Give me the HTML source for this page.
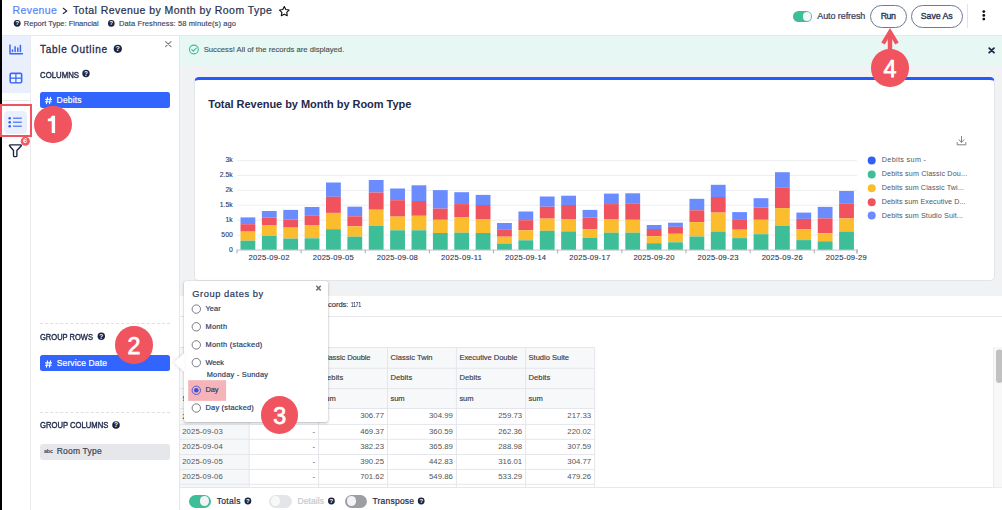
<!DOCTYPE html>
<html><head><meta charset="utf-8">
<style>
*{box-sizing:border-box;margin:0;padding:0}
html,body{width:1002px;height:510px;overflow:hidden;background:#fff;font-family:"Liberation Sans",sans-serif}
.a{position:absolute}
.t{position:absolute;white-space:pre;line-height:1;font-family:"Liberation Sans",sans-serif}
svg.full{position:absolute;left:0;top:0;width:1002px;height:510px;overflow:visible}
.badge{position:absolute;width:37.4px;height:37.4px;border-radius:50%;background:#f0545f;color:#fff;font-family:"Liberation Sans",sans-serif;font-weight:400;font-size:23.3px;line-height:37.4px;text-align:center;-webkit-text-stroke:0.75px #fff}
.badge span{position:relative;top:1.6px}
.tog{position:absolute;border-radius:7px}
.knob{position:absolute;border-radius:50%;background:#fff}
</style></head><body>
<!-- header -->
<div class="a" style="left:0;top:34.6px;width:1002px;height:1px;background:#e6e8ec"></div>
<!-- sidebar -->
<div class="a" style="left:2px;top:35.6px;width:28px;height:57.2px;background:#e9effd"></div>
<div class="a" style="left:2px;top:99.5px;width:28px;height:1px;background:#e6e8ec"></div>
<div class="a" style="left:30px;top:35px;width:1px;height:475px;background:#e9ebef"></div>
<div class="a" style="left:4.2px;top:111px;width:22.4px;height:22.6px;border-radius:4.5px;background:#e9effd"></div>
<!-- outline panel -->
<div class="a" style="left:179px;top:35px;width:1px;height:475px;background:#e4e6ea"></div>
<div class="a" style="left:40px;top:92.3px;width:130px;height:15.8px;border-radius:2.5px;background:#3165fd"></div>
<div class="a" style="left:40px;top:323px;width:130px;height:0;border-top:1px dashed #dcdfe4"></div>
<div class="a" style="left:40px;top:355.3px;width:130px;height:16.2px;border-radius:2.5px;background:#3165fd"></div>
<div class="a" style="left:40px;top:411.5px;width:130px;height:0;border-top:1px dashed #dcdfe4"></div>
<div class="a" style="left:40px;top:443.8px;width:130px;height:16px;border-radius:3px;background:#e5e7eb"></div>
<!-- main -->
<div class="a" style="left:180px;top:35.6px;width:822px;height:29.6px;background:#e7f7f3"></div>
<div class="a" style="left:180px;top:65.2px;width:822px;height:230.4px;background:#f1f2f4"></div>
<div class="a" style="left:193.6px;top:77.3px;width:801.5px;height:203.3px;background:#fff;border:1px solid #e3e5e9;border-top:3px solid #2659fb;border-radius:5px"></div>
<div class="a" style="left:180px;top:316px;width:822px;height:1px;background:#e6e8ec"></div>
<div class="a" style="left:180px;top:487px;width:822px;height:1px;background:#e6e8ec"></div>
<svg class="full" viewBox="0 0 1002 510"><rect x="179.5" y="347.5" width="415.20000000000005" height="61.0" fill="#f7f8fa"/>
<rect x="179.5" y="408.5" width="69.69999999999999" height="78.5" fill="#f6f7f9"/>
<line x1="179.5" y1="347.5" x2="594.7" y2="347.5" stroke="#e4e6eb" stroke-width="1"/>
<line x1="179.5" y1="368.3" x2="594.7" y2="368.3" stroke="#e4e6eb" stroke-width="1"/>
<line x1="179.5" y1="388.7" x2="594.7" y2="388.7" stroke="#e4e6eb" stroke-width="1"/>
<line x1="179.5" y1="408.5" x2="594.7" y2="408.5" stroke="#e4e6eb" stroke-width="1"/>
<line x1="179.5" y1="424.4" x2="594.7" y2="424.4" stroke="#e4e6eb" stroke-width="1"/>
<line x1="179.5" y1="439.3" x2="594.7" y2="439.3" stroke="#e4e6eb" stroke-width="1"/>
<line x1="179.5" y1="454.5" x2="594.7" y2="454.5" stroke="#e4e6eb" stroke-width="1"/>
<line x1="179.5" y1="469.4" x2="594.7" y2="469.4" stroke="#e4e6eb" stroke-width="1"/>
<line x1="179.5" y1="484.3" x2="594.7" y2="484.3" stroke="#e4e6eb" stroke-width="1"/>
<line x1="179.5" y1="347.5" x2="179.5" y2="487" stroke="#e4e6eb" stroke-width="1"/>
<line x1="249.2" y1="347.5" x2="249.2" y2="487" stroke="#e4e6eb" stroke-width="1"/>
<line x1="318.6" y1="347.5" x2="318.6" y2="487" stroke="#e4e6eb" stroke-width="1"/>
<line x1="387.5" y1="347.5" x2="387.5" y2="487" stroke="#e4e6eb" stroke-width="1"/>
<line x1="456.4" y1="347.5" x2="456.4" y2="487" stroke="#e4e6eb" stroke-width="1"/>
<line x1="525.6" y1="347.5" x2="525.6" y2="487" stroke="#e4e6eb" stroke-width="1"/>
<line x1="594.7" y1="347.5" x2="594.7" y2="487" stroke="#e4e6eb" stroke-width="1"/>
<rect x="993.5" y="347" width="8.5" height="140.3" fill="#f8f8f8"/>
<line x1="993.6" y1="347" x2="993.6" y2="487.3" stroke="#ececec" stroke-width="1"/>
<rect x="996" y="349.4" width="6.5" height="33.6" rx="3" fill="#c1c1c1"/>
<line x1="237.2" y1="235.1" x2="857" y2="235.1" stroke="#eceef2" stroke-width="1"/>
<line x1="237.2" y1="220.2" x2="857" y2="220.2" stroke="#eceef2" stroke-width="1"/>
<line x1="237.2" y1="205.2" x2="857" y2="205.2" stroke="#eceef2" stroke-width="1"/>
<line x1="237.2" y1="190.4" x2="857" y2="190.4" stroke="#eceef2" stroke-width="1"/>
<line x1="237.2" y1="175.5" x2="857" y2="175.5" stroke="#eceef2" stroke-width="1"/>
<line x1="237.2" y1="160.6" x2="857" y2="160.6" stroke="#eceef2" stroke-width="1"/>
<line x1="237" y1="250.1" x2="857.5" y2="250.1" stroke="#c2c6cd" stroke-width="1"/>
<line x1="237.00" y1="249.6" x2="237.00" y2="253.4" stroke="#a9adb5" stroke-width="1"/>
<line x1="301.14" y1="249.6" x2="301.14" y2="253.4" stroke="#a9adb5" stroke-width="1"/>
<line x1="365.28" y1="249.6" x2="365.28" y2="253.4" stroke="#a9adb5" stroke-width="1"/>
<line x1="429.41" y1="249.6" x2="429.41" y2="253.4" stroke="#a9adb5" stroke-width="1"/>
<line x1="493.55" y1="249.6" x2="493.55" y2="253.4" stroke="#a9adb5" stroke-width="1"/>
<line x1="557.69" y1="249.6" x2="557.69" y2="253.4" stroke="#a9adb5" stroke-width="1"/>
<line x1="621.83" y1="249.6" x2="621.83" y2="253.4" stroke="#a9adb5" stroke-width="1"/>
<line x1="685.97" y1="249.6" x2="685.97" y2="253.4" stroke="#a9adb5" stroke-width="1"/>
<line x1="750.10" y1="249.6" x2="750.10" y2="253.4" stroke="#a9adb5" stroke-width="1"/>
<line x1="814.24" y1="249.6" x2="814.24" y2="253.4" stroke="#a9adb5" stroke-width="1"/>
<line x1="857.00" y1="249.6" x2="857.00" y2="253.4" stroke="#a9adb5" stroke-width="1"/>
<line x1="857" y1="249.6" x2="857" y2="253.4" stroke="#a9adb5" stroke-width="1"/>
<rect x="240.50" y="217.4" width="14.8" height="6.80" fill="#6a8cff"/>
<rect x="240.50" y="224.2" width="14.8" height="7.40" fill="#f0525e"/>
<rect x="240.50" y="231.6" width="14.8" height="9.10" fill="#fbbd2e"/>
<rect x="240.50" y="240.7" width="14.8" height="9.00" fill="#3dbd98"/>
<rect x="261.88" y="211" width="14.8" height="6.40" fill="#6a8cff"/>
<rect x="261.88" y="217.4" width="14.8" height="7.60" fill="#f0525e"/>
<rect x="261.88" y="225" width="14.8" height="10.90" fill="#fbbd2e"/>
<rect x="261.88" y="235.9" width="14.8" height="13.80" fill="#3dbd98"/>
<rect x="283.26" y="209.9" width="14.8" height="9.50" fill="#6a8cff"/>
<rect x="283.26" y="219.4" width="14.8" height="8.20" fill="#f0525e"/>
<rect x="283.26" y="227.6" width="14.8" height="11.00" fill="#fbbd2e"/>
<rect x="283.26" y="238.6" width="14.8" height="11.10" fill="#3dbd98"/>
<rect x="304.64" y="207" width="14.8" height="8.80" fill="#6a8cff"/>
<rect x="304.64" y="215.8" width="14.8" height="9.20" fill="#f0525e"/>
<rect x="304.64" y="225" width="14.8" height="13.30" fill="#fbbd2e"/>
<rect x="304.64" y="238.3" width="14.8" height="11.40" fill="#3dbd98"/>
<rect x="326.02" y="182.5" width="14.8" height="14.30" fill="#6a8cff"/>
<rect x="326.02" y="196.8" width="14.8" height="16.10" fill="#f0525e"/>
<rect x="326.02" y="212.9" width="14.8" height="16.30" fill="#fbbd2e"/>
<rect x="326.02" y="229.2" width="14.8" height="20.50" fill="#3dbd98"/>
<rect x="347.40" y="206.7" width="14.8" height="9.60" fill="#6a8cff"/>
<rect x="347.40" y="216.3" width="14.8" height="10.00" fill="#f0525e"/>
<rect x="347.40" y="226.3" width="14.8" height="10.40" fill="#fbbd2e"/>
<rect x="347.40" y="236.7" width="14.8" height="13.00" fill="#3dbd98"/>
<rect x="368.78" y="180" width="14.8" height="12.50" fill="#6a8cff"/>
<rect x="368.78" y="192.5" width="14.8" height="17.20" fill="#f0525e"/>
<rect x="368.78" y="209.7" width="14.8" height="16.10" fill="#fbbd2e"/>
<rect x="368.78" y="225.8" width="14.8" height="23.90" fill="#3dbd98"/>
<rect x="390.16" y="188.5" width="14.8" height="11.70" fill="#6a8cff"/>
<rect x="390.16" y="200.2" width="14.8" height="16.40" fill="#f0525e"/>
<rect x="390.16" y="216.6" width="14.8" height="13.70" fill="#fbbd2e"/>
<rect x="390.16" y="230.3" width="14.8" height="19.40" fill="#3dbd98"/>
<rect x="411.53" y="185.3" width="14.8" height="15.70" fill="#6a8cff"/>
<rect x="411.53" y="201" width="14.8" height="14.80" fill="#f0525e"/>
<rect x="411.53" y="215.8" width="14.8" height="14.50" fill="#fbbd2e"/>
<rect x="411.53" y="230.3" width="14.8" height="19.40" fill="#3dbd98"/>
<rect x="432.91" y="190.1" width="14.8" height="18.50" fill="#6a8cff"/>
<rect x="432.91" y="208.6" width="14.8" height="11.20" fill="#f0525e"/>
<rect x="432.91" y="219.8" width="14.8" height="13.20" fill="#fbbd2e"/>
<rect x="432.91" y="233" width="14.8" height="16.70" fill="#3dbd98"/>
<rect x="454.29" y="192.2" width="14.8" height="11.90" fill="#6a8cff"/>
<rect x="454.29" y="204.1" width="14.8" height="12.90" fill="#f0525e"/>
<rect x="454.29" y="217" width="14.8" height="15.70" fill="#fbbd2e"/>
<rect x="454.29" y="232.7" width="14.8" height="17.00" fill="#3dbd98"/>
<rect x="475.67" y="194.9" width="14.8" height="10.10" fill="#6a8cff"/>
<rect x="475.67" y="205" width="14.8" height="14.00" fill="#f0525e"/>
<rect x="475.67" y="219" width="14.8" height="14.00" fill="#fbbd2e"/>
<rect x="475.67" y="233" width="14.8" height="16.70" fill="#3dbd98"/>
<rect x="497.05" y="223" width="14.8" height="6.80" fill="#6a8cff"/>
<rect x="497.05" y="229.8" width="14.8" height="6.90" fill="#f0525e"/>
<rect x="497.05" y="236.7" width="14.8" height="6.80" fill="#fbbd2e"/>
<rect x="497.05" y="243.5" width="14.8" height="6.20" fill="#3dbd98"/>
<rect x="518.43" y="211.5" width="14.8" height="8.70" fill="#6a8cff"/>
<rect x="518.43" y="220.2" width="14.8" height="10.10" fill="#f0525e"/>
<rect x="518.43" y="230.3" width="14.8" height="10.00" fill="#fbbd2e"/>
<rect x="518.43" y="240.3" width="14.8" height="9.40" fill="#3dbd98"/>
<rect x="539.81" y="196.5" width="14.8" height="10.20" fill="#6a8cff"/>
<rect x="539.81" y="206.7" width="14.8" height="11.90" fill="#f0525e"/>
<rect x="539.81" y="218.6" width="14.8" height="12.20" fill="#fbbd2e"/>
<rect x="539.81" y="230.8" width="14.8" height="18.90" fill="#3dbd98"/>
<rect x="561.19" y="195.7" width="14.8" height="9.30" fill="#6a8cff"/>
<rect x="561.19" y="205" width="14.8" height="14.00" fill="#f0525e"/>
<rect x="561.19" y="219" width="14.8" height="12.40" fill="#fbbd2e"/>
<rect x="561.19" y="231.4" width="14.8" height="18.30" fill="#3dbd98"/>
<rect x="582.57" y="209.9" width="14.8" height="7.50" fill="#6a8cff"/>
<rect x="582.57" y="217.4" width="14.8" height="11.80" fill="#f0525e"/>
<rect x="582.57" y="229.2" width="14.8" height="8.60" fill="#fbbd2e"/>
<rect x="582.57" y="237.8" width="14.8" height="11.90" fill="#3dbd98"/>
<rect x="603.95" y="193.6" width="14.8" height="10.50" fill="#6a8cff"/>
<rect x="603.95" y="204.1" width="14.8" height="15.40" fill="#f0525e"/>
<rect x="603.95" y="219.5" width="14.8" height="13.20" fill="#fbbd2e"/>
<rect x="603.95" y="232.7" width="14.8" height="17.00" fill="#3dbd98"/>
<rect x="625.33" y="193.3" width="14.8" height="10.50" fill="#6a8cff"/>
<rect x="625.33" y="203.8" width="14.8" height="16.00" fill="#f0525e"/>
<rect x="625.33" y="219.8" width="14.8" height="12.90" fill="#fbbd2e"/>
<rect x="625.33" y="232.7" width="14.8" height="17.00" fill="#3dbd98"/>
<rect x="646.71" y="225" width="14.8" height="4.00" fill="#6a8cff"/>
<rect x="646.71" y="229" width="14.8" height="7.20" fill="#f0525e"/>
<rect x="646.71" y="236.2" width="14.8" height="7.00" fill="#fbbd2e"/>
<rect x="646.71" y="243.2" width="14.8" height="6.50" fill="#3dbd98"/>
<rect x="668.09" y="222.7" width="14.8" height="4.10" fill="#6a8cff"/>
<rect x="668.09" y="226.8" width="14.8" height="7.00" fill="#f0525e"/>
<rect x="668.09" y="233.8" width="14.8" height="8.50" fill="#fbbd2e"/>
<rect x="668.09" y="242.3" width="14.8" height="7.40" fill="#3dbd98"/>
<rect x="689.47" y="198.8" width="14.8" height="11.50" fill="#6a8cff"/>
<rect x="689.47" y="210.3" width="14.8" height="11.80" fill="#f0525e"/>
<rect x="689.47" y="222.1" width="14.8" height="14.40" fill="#fbbd2e"/>
<rect x="689.47" y="236.5" width="14.8" height="13.20" fill="#3dbd98"/>
<rect x="710.84" y="184.8" width="14.8" height="12.20" fill="#6a8cff"/>
<rect x="710.84" y="197" width="14.8" height="15.60" fill="#f0525e"/>
<rect x="710.84" y="212.6" width="14.8" height="18.90" fill="#fbbd2e"/>
<rect x="710.84" y="231.5" width="14.8" height="18.20" fill="#3dbd98"/>
<rect x="732.22" y="212.1" width="14.8" height="7.10" fill="#6a8cff"/>
<rect x="732.22" y="219.2" width="14.8" height="10.50" fill="#f0525e"/>
<rect x="732.22" y="229.7" width="14.8" height="8.40" fill="#fbbd2e"/>
<rect x="732.22" y="238.1" width="14.8" height="11.60" fill="#3dbd98"/>
<rect x="753.60" y="198.2" width="14.8" height="9.40" fill="#6a8cff"/>
<rect x="753.60" y="207.6" width="14.8" height="12.20" fill="#f0525e"/>
<rect x="753.60" y="219.8" width="14.8" height="14.40" fill="#fbbd2e"/>
<rect x="753.60" y="234.2" width="14.8" height="15.50" fill="#3dbd98"/>
<rect x="774.98" y="172.2" width="14.8" height="15.60" fill="#6a8cff"/>
<rect x="774.98" y="187.8" width="14.8" height="20.30" fill="#f0525e"/>
<rect x="774.98" y="208.1" width="14.8" height="17.60" fill="#fbbd2e"/>
<rect x="774.98" y="225.7" width="14.8" height="24.00" fill="#3dbd98"/>
<rect x="796.36" y="212.6" width="14.8" height="6.30" fill="#6a8cff"/>
<rect x="796.36" y="218.9" width="14.8" height="10.40" fill="#f0525e"/>
<rect x="796.36" y="229.3" width="14.8" height="10.80" fill="#fbbd2e"/>
<rect x="796.36" y="240.1" width="14.8" height="9.60" fill="#3dbd98"/>
<rect x="817.74" y="206.9" width="14.8" height="11.50" fill="#6a8cff"/>
<rect x="817.74" y="218.4" width="14.8" height="14.90" fill="#f0525e"/>
<rect x="817.74" y="233.3" width="14.8" height="8.00" fill="#fbbd2e"/>
<rect x="817.74" y="241.3" width="14.8" height="8.40" fill="#3dbd98"/>
<rect x="839.12" y="191" width="14.8" height="12.30" fill="#6a8cff"/>
<rect x="839.12" y="203.3" width="14.8" height="15.10" fill="#f0525e"/>
<rect x="839.12" y="218.4" width="14.8" height="13.10" fill="#fbbd2e"/>
<rect x="839.12" y="231.5" width="14.8" height="18.20" fill="#3dbd98"/>
<circle cx="871.7" cy="160.4" r="4" fill="#2f5ff5"/>
<circle cx="871.7" cy="174.4" r="4" fill="#3dbd98"/>
<circle cx="871.7" cy="188.2" r="4" fill="#fbbd2e"/>
<circle cx="871.7" cy="202.2" r="4" fill="#f0525e"/>
<circle cx="871.7" cy="215.6" r="4" fill="#6a8cff"/>
<circle cx="17.2" cy="23.35" r="3.4" fill="#1b2442"/><text x="17.2" y="25.46" text-anchor="middle" font-family="Liberation Sans" font-weight="700" font-size="5.95" fill="#fff">?</text>
<circle cx="111.3" cy="23.4" r="3.3" fill="#1b2442"/><text x="111.3" y="25.45" text-anchor="middle" font-family="Liberation Sans" font-weight="700" font-size="5.77" fill="#fff">?</text>
<path d="M63.3,8.3 L66.8,10.9 L63.3,13.5" fill="none" stroke="#28314f" stroke-width="1.25" stroke-linecap="round" stroke-linejoin="round"/>
<polygon points="284.30,6.60 285.80,9.54 289.06,10.05 286.73,12.39 287.24,15.65 284.30,14.15 281.36,15.65 281.87,12.39 279.54,10.05 282.80,9.54" fill="none" stroke="#111" stroke-width="1.15" stroke-linejoin="round"/>
<circle cx="983.8" cy="11.6" r="1.4" fill="#111"/>
<circle cx="983.8" cy="15.4" r="1.4" fill="#111"/>
<circle cx="983.8" cy="19.1" r="1.4" fill="#111"/>
<circle cx="117.8" cy="48.8" r="4.1" fill="#1b2442"/><text x="117.8" y="51.34" text-anchor="middle" font-family="Liberation Sans" font-weight="700" font-size="7.17" fill="#fff">?</text>
<circle cx="86.0" cy="73.5" r="3.7" fill="#1b2442"/><text x="86.0" y="75.79" text-anchor="middle" font-family="Liberation Sans" font-weight="700" font-size="6.48" fill="#fff">?</text>
<circle cx="101.3" cy="336.3" r="3.7" fill="#1b2442"/><text x="101.3" y="338.59" text-anchor="middle" font-family="Liberation Sans" font-weight="700" font-size="6.48" fill="#fff">?</text>
<circle cx="116.0" cy="425.0" r="3.8" fill="#1b2442"/><text x="116.0" y="427.36" text-anchor="middle" font-family="Liberation Sans" font-weight="700" font-size="6.65" fill="#fff">?</text>
<circle cx="247.9" cy="501.0" r="3.4" fill="#1b2442"/><text x="247.9" y="503.11" text-anchor="middle" font-family="Liberation Sans" font-weight="700" font-size="5.95" fill="#fff">?</text>
<circle cx="331.4" cy="501.0" r="3.4" fill="#1b2442"/><text x="331.4" y="503.11" text-anchor="middle" font-family="Liberation Sans" font-weight="700" font-size="5.95" fill="#fff">?</text>
<circle cx="421.2" cy="501.0" r="3.4" fill="#1b2442"/><text x="421.2" y="503.11" text-anchor="middle" font-family="Liberation Sans" font-weight="700" font-size="5.95" fill="#fff">?</text>
<path d="M165.6,41.6 L171,46.6 M171,41.6 L165.6,46.6" stroke="#7a7e86" stroke-width="1.1" stroke-linecap="round"/>
<path d="M989.2,48.1 L994,52.6 M994,48.1 L989.2,52.6" stroke="#1b2442" stroke-width="1.8" stroke-linecap="round"/>
<circle cx="193.9" cy="49.5" r="4.4" fill="none" stroke="#3dbd98" stroke-width="1.1"/>
<path d="M191.8,49.6 L193.3,51.1 L196.1,48.1" fill="none" stroke="#3dbd98" stroke-width="1.1" stroke-linecap="round" stroke-linejoin="round"/>
<path d="M961.5,136.5 V142.2 M958.9,139.7 L961.5,142.3 L964.1,139.7 M957.2,142.5 V144.8 H965.8 V142.5" fill="none" stroke="#6f737c" stroke-width="0.9" stroke-linecap="round" stroke-linejoin="round"/>
<path d="M10.0,44.9 V53.8 H22.4" fill="none" stroke="#3a68f5" stroke-width="1.5" stroke-linecap="round" stroke-linejoin="round"/>
<line x1="12.5" y1="49.9" x2="12.5" y2="51.6" stroke="#3a68f5" stroke-width="1.5" stroke-linecap="round"/>
<line x1="15.1" y1="46.8" x2="15.1" y2="51.6" stroke="#3a68f5" stroke-width="1.5" stroke-linecap="round"/>
<line x1="17.8" y1="48.0" x2="17.8" y2="51.6" stroke="#3a68f5" stroke-width="1.5" stroke-linecap="round"/>
<line x1="20.4" y1="45.5" x2="20.4" y2="51.6" stroke="#3a68f5" stroke-width="1.5" stroke-linecap="round"/>
<rect x="9.4" y="72.4" width="13" height="11.2" rx="2" fill="#3a68f5"/>
<rect x="11.0" y="74.2" width="4.3" height="3.3" fill="#f4f6fe"/>
<rect x="16.5" y="74.2" width="4.3" height="3.3" fill="#f4f6fe"/>
<rect x="11.0" y="78.8" width="4.3" height="3.3" fill="#f4f6fe"/>
<rect x="16.5" y="78.8" width="4.3" height="3.3" fill="#f4f6fe"/>
<circle cx="9.7" cy="118.2" r="1.25" fill="#2f60f2"/>
<line x1="13" y1="118.2" x2="21.8" y2="118.2" stroke="#3f6cf2" stroke-width="1.15" stroke-linecap="butt"/>
<circle cx="9.7" cy="122.2" r="1.25" fill="#2f60f2"/>
<line x1="13" y1="122.2" x2="21.8" y2="122.2" stroke="#3f6cf2" stroke-width="1.15" stroke-linecap="butt"/>
<circle cx="9.7" cy="126.2" r="1.25" fill="#2f60f2"/>
<line x1="13" y1="126.2" x2="21.8" y2="126.2" stroke="#3f6cf2" stroke-width="1.15" stroke-linecap="butt"/>
<path d="M10.2,144.9 H20.6 Q21.9,144.9 21.1,146 L16.9,150.5 V155.4 Q16.9,156.6 15.8,156.6 H14.6 Q13.5,156.6 13.5,155.4 V150.5 L9.7,146 Q8.9,144.9 10.2,144.9 Z" fill="none" stroke="#1b2442" stroke-width="1.35" stroke-linejoin="round"/>
<path d="M47.5,97.3 L46.5,103.7 M50.5,97.3 L49.5,103.7 M45.699999999999996,99.4 H51.5 M45.4,101.7 H51.199999999999996" stroke="#fff" stroke-width="1.1" stroke-linecap="round"/>
<path d="M47.5,360.8 L46.5,367.2 M50.5,360.8 L49.5,367.2 M45.699999999999996,362.9 H51.5 M45.4,365.2 H51.199999999999996" stroke="#fff" stroke-width="1.1" stroke-linecap="round"/>
<text x="44.0" y="453.3" font-family="Liberation Sans" font-size="5.4" font-weight="700" fill="#3a4258" letter-spacing="-0.2">abc</text></svg>
<!-- top right controls -->
<div class="tog" style="left:792.7px;top:11px;width:19.4px;height:11px;background:#3dbd98;border-radius:5.5px"></div>
<div class="knob" style="left:802.7px;top:12.3px;width:8.6px;height:8.6px;background:#f6f5f7"></div>
<div class="a" style="left:870px;top:4.7px;width:36.8px;height:23px;border:1px solid #6f7a95;border-radius:12px"></div>
<div class="a" style="left:910.7px;top:4.7px;width:52.1px;height:23px;border:1px solid #6f7a95;border-radius:12px"></div>
<div class="a" style="left:967px;top:4.4px;width:1px;height:23.2px;background:#e2e4ea"></div>
<!-- footer toggles -->
<div class="tog" style="left:188.9px;top:494.5px;width:22.1px;height:13px;background:#3dbd98;border-radius:6.5px"></div>
<div class="knob" style="left:199.8px;top:496.35px;width:9.3px;height:9.3px;background:#f3f3f5"></div>
<div class="tog" style="left:269.3px;top:494.5px;width:22.4px;height:13px;background:#e4e5e8;border-radius:6.5px"></div>
<div class="knob" style="left:271.1px;top:496.35px;width:9.3px;height:9.3px;background:#f8f8f9"></div>
<div class="tog" style="left:344.8px;top:494.5px;width:22.2px;height:13px;background:#9c9ea4;border-radius:6.5px"></div>
<div class="knob" style="left:346.6px;top:496.35px;width:9.3px;height:9.3px;background:#f3f3f5"></div>
<div class="t" style="left:12.60px;top:5.21px;font-size:10.5px;color:#5b86f6;letter-spacing:0.378px;-webkit-text-stroke:0.22px #5b86f6;">Revenue</div>
<div class="t" style="left:72.90px;top:5.21px;font-size:10.5px;color:#28314f;letter-spacing:0.451px;-webkit-text-stroke:0.22px #28314f;">Total Revenue by Month by Room Type</div>
<div class="t" style="left:23.80px;top:19.85px;font-size:7.5px;color:#3b4460;-webkit-text-stroke:0.15px #3b4460;">Report Type: Financial</div>
<div class="t" style="left:119.00px;top:19.85px;font-size:7.5px;color:#3b4460;letter-spacing:0.116px;-webkit-text-stroke:0.15px #3b4460;">Data Freshness: 58 minute(s) ago</div>
<div class="t" style="left:817.30px;top:12.48px;font-size:9px;color:#2f3a5a;letter-spacing:-0.094px;-webkit-text-stroke:0.2px #2f3a5a;">Auto refresh</div>
<div class="t" style="left:880.70px;top:11.65px;font-size:8.8px;color:#27314f;letter-spacing:-0.420px;-webkit-text-stroke:0.32px #27314f;">Run</div>
<div class="t" style="left:920.80px;top:11.65px;font-size:8.8px;color:#27314f;letter-spacing:-0.080px;-webkit-text-stroke:0.32px #27314f;">Save As</div>
<div class="t" style="left:40.00px;top:45.03px;font-size:10.0px;color:#1f2a4a;letter-spacing:0.719px;-webkit-text-stroke:0.28px #1f2a4a;">Table Outline</div>
<div class="t" style="left:39.50px;top:70.74px;font-size:8.7px;color:#1f2a4a;transform:scaleX(0.8975);transform-origin:0 0;-webkit-text-stroke:0.4px #1f2a4a;">COLUMNS</div>
<div class="t" style="left:56.60px;top:95.80px;font-size:8.5px;color:#ffffff;letter-spacing:0.181px;-webkit-text-stroke:0.2px #ffffff;">Debits</div>
<div class="t" style="left:40.00px;top:333.44px;font-size:8.7px;color:#1f2a4a;transform:scaleX(0.8669);transform-origin:0 0;-webkit-text-stroke:0.4px #1f2a4a;">GROUP ROWS</div>
<div class="t" style="left:56.70px;top:359.40px;font-size:8.5px;color:#ffffff;letter-spacing:0.148px;-webkit-text-stroke:0.2px #ffffff;">Service Date</div>
<div class="t" style="left:40.00px;top:421.14px;font-size:8.7px;color:#1f2a4a;transform:scaleX(0.8806);transform-origin:0 0;-webkit-text-stroke:0.4px #1f2a4a;">GROUP COLUMNS</div>
<div class="t" style="left:56.70px;top:447.40px;font-size:8.5px;color:#3a4258;letter-spacing:0.211px;-webkit-text-stroke:0.2px #3a4258;">Room Type</div>
<div class="t" style="left:203.70px;top:46.18px;font-size:7.7px;color:#44524e;-webkit-text-stroke:0.12px #44524e;">Success! All of the records are displayed.</div>
<div class="t" style="left:208.30px;top:99.49px;font-size:11px;color:#1e2a4a;font-weight:700;letter-spacing:-0.039px;">Total Revenue by Month by Room Type</div>
<div class="t" style="left:228.92px;top:246.64px;font-size:6.8px;color:#30395a;-webkit-text-stroke:0.12px #30395a;">0</div>
<div class="t" style="left:221.36px;top:231.74px;font-size:6.8px;color:#30395a;-webkit-text-stroke:0.12px #30395a;">500</div>
<div class="t" style="left:225.51px;top:216.84px;font-size:6.8px;color:#30395a;-webkit-text-stroke:0.12px #30395a;">1k</div>
<div class="t" style="left:219.84px;top:201.84px;font-size:6.8px;color:#30395a;-webkit-text-stroke:0.12px #30395a;">1.5k</div>
<div class="t" style="left:225.51px;top:187.04px;font-size:6.8px;color:#30395a;-webkit-text-stroke:0.12px #30395a;">2k</div>
<div class="t" style="left:219.84px;top:172.14px;font-size:6.8px;color:#30395a;-webkit-text-stroke:0.12px #30395a;">2.5k</div>
<div class="t" style="left:225.51px;top:157.24px;font-size:6.8px;color:#30395a;-webkit-text-stroke:0.12px #30395a;">3k</div>
<div class="t" style="left:248.57px;top:254.27px;font-size:7.6px;color:#30395a;letter-spacing:0.238px;-webkit-text-stroke:0.12px #30395a;">2025-09-02</div>
<div class="t" style="left:312.71px;top:254.27px;font-size:7.6px;color:#30395a;letter-spacing:0.238px;-webkit-text-stroke:0.12px #30395a;">2025-09-05</div>
<div class="t" style="left:376.84px;top:254.27px;font-size:7.6px;color:#30395a;letter-spacing:0.238px;-webkit-text-stroke:0.12px #30395a;">2025-09-08</div>
<div class="t" style="left:440.98px;top:254.27px;font-size:7.6px;color:#30395a;letter-spacing:0.302px;-webkit-text-stroke:0.12px #30395a;">2025-09-11</div>
<div class="t" style="left:505.12px;top:254.27px;font-size:7.6px;color:#30395a;letter-spacing:0.238px;-webkit-text-stroke:0.12px #30395a;">2025-09-14</div>
<div class="t" style="left:569.26px;top:254.27px;font-size:7.6px;color:#30395a;letter-spacing:0.238px;-webkit-text-stroke:0.12px #30395a;">2025-09-17</div>
<div class="t" style="left:633.40px;top:254.27px;font-size:7.6px;color:#30395a;letter-spacing:0.238px;-webkit-text-stroke:0.12px #30395a;">2025-09-20</div>
<div class="t" style="left:697.53px;top:254.27px;font-size:7.6px;color:#30395a;letter-spacing:0.238px;-webkit-text-stroke:0.12px #30395a;">2025-09-23</div>
<div class="t" style="left:761.67px;top:254.27px;font-size:7.6px;color:#30395a;letter-spacing:0.238px;-webkit-text-stroke:0.12px #30395a;">2025-09-26</div>
<div class="t" style="left:825.81px;top:254.27px;font-size:7.6px;color:#30395a;letter-spacing:0.238px;-webkit-text-stroke:0.12px #30395a;">2025-09-29</div>
<div class="t" style="left:881.80px;top:156.41px;font-size:7.2px;color:#4f5566;letter-spacing:0.351px;">Debits sum -</div>
<div class="t" style="left:881.80px;top:170.41px;font-size:7.2px;color:#4f5566;letter-spacing:0.130px;">Debits sum Classic Dou...</div>
<div class="t" style="left:881.80px;top:184.21px;font-size:7.2px;color:#4f5566;letter-spacing:0.102px;">Debits sum Classic Twi...</div>
<div class="t" style="left:881.80px;top:198.21px;font-size:7.2px;color:#4f5566;letter-spacing:0.063px;">Debits sum Executive D...</div>
<div class="t" style="left:881.80px;top:211.61px;font-size:7.2px;color:#4f5566;letter-spacing:0.104px;">Debits sum Studio Suit...</div>
<div class="t" style="left:303.29px;top:300.75px;font-size:7.5px;color:#2b3553;-webkit-text-stroke:0.12px #2b3553;">Total re</div>
<div class="t" style="left:328.00px;top:300.68px;font-size:7.7px;color:#2b3553;letter-spacing:-0.087px;-webkit-text-stroke:0.15px #2b3553;">cords:</div>
<div class="t" style="left:350.50px;top:300.68px;font-size:7.7px;color:#2b3553;transform:scaleX(0.6049);transform-origin:0 0;-webkit-text-stroke:0.15px #2b3553;">1171</div>
<div class="t" style="left:321.60px;top:353.77px;font-size:7.6px;color:#3a3a3a;letter-spacing:-0.127px;-webkit-text-stroke:0.14px #3a3a3a;">Classic Double</div>
<div class="t" style="left:390.50px;top:353.77px;font-size:7.6px;color:#3a3a3a;-webkit-text-stroke:0.14px #3a3a3a;">Classic Twin</div>
<div class="t" style="left:459.40px;top:353.77px;font-size:7.6px;color:#3a3a3a;letter-spacing:-0.067px;-webkit-text-stroke:0.14px #3a3a3a;">Executive Double</div>
<div class="t" style="left:528.60px;top:353.77px;font-size:7.6px;color:#3a3a3a;letter-spacing:-0.041px;-webkit-text-stroke:0.14px #3a3a3a;">Studio Suite</div>
<div class="t" style="left:321.60px;top:374.37px;font-size:7.6px;color:#3a3a3a;letter-spacing:0.034px;-webkit-text-stroke:0.14px #3a3a3a;">Debits</div>
<div class="t" style="left:390.50px;top:374.37px;font-size:7.6px;color:#3a3a3a;letter-spacing:0.034px;-webkit-text-stroke:0.14px #3a3a3a;">Debits</div>
<div class="t" style="left:459.40px;top:374.37px;font-size:7.6px;color:#3a3a3a;letter-spacing:0.034px;-webkit-text-stroke:0.14px #3a3a3a;">Debits</div>
<div class="t" style="left:528.60px;top:374.37px;font-size:7.6px;color:#3a3a3a;letter-spacing:0.034px;-webkit-text-stroke:0.14px #3a3a3a;">Debits</div>
<div class="t" style="left:182.50px;top:395.27px;font-size:7.6px;color:#3a3a3a;-webkit-text-stroke:0.14px #3a3a3a;">Service Date</div>
<div class="t" style="left:321.60px;top:395.27px;font-size:7.6px;color:#3a3a3a;letter-spacing:-0.080px;-webkit-text-stroke:0.14px #3a3a3a;">sum</div>
<div class="t" style="left:390.50px;top:395.27px;font-size:7.6px;color:#3a3a3a;letter-spacing:-0.080px;-webkit-text-stroke:0.14px #3a3a3a;">sum</div>
<div class="t" style="left:459.40px;top:395.27px;font-size:7.6px;color:#3a3a3a;letter-spacing:-0.080px;-webkit-text-stroke:0.14px #3a3a3a;">sum</div>
<div class="t" style="left:528.60px;top:395.27px;font-size:7.6px;color:#3a3a3a;letter-spacing:-0.080px;-webkit-text-stroke:0.14px #3a3a3a;">sum</div>
<div class="t" style="left:182.20px;top:412.63px;font-size:7.7px;color:#555;letter-spacing:0.141px;">2025-09-02</div>
<div class="t" style="left:312.49px;top:412.45px;font-size:7.8px;color:#555;">-</div>
<div class="t" style="left:360.14px;top:412.45px;font-size:7.8px;color:#555;">306.77</div>
<div class="t" style="left:429.04px;top:412.45px;font-size:7.8px;color:#555;">304.99</div>
<div class="t" style="left:498.24px;top:412.45px;font-size:7.8px;color:#555;">259.73</div>
<div class="t" style="left:567.34px;top:412.45px;font-size:7.8px;color:#555;">217.33</div>
<div class="t" style="left:182.20px;top:428.03px;font-size:7.7px;color:#555;letter-spacing:0.141px;">2025-09-03</div>
<div class="t" style="left:312.49px;top:427.85px;font-size:7.8px;color:#555;">-</div>
<div class="t" style="left:360.14px;top:427.85px;font-size:7.8px;color:#555;">469.37</div>
<div class="t" style="left:429.04px;top:427.85px;font-size:7.8px;color:#555;">360.59</div>
<div class="t" style="left:498.24px;top:427.85px;font-size:7.8px;color:#555;">262.36</div>
<div class="t" style="left:567.34px;top:427.85px;font-size:7.8px;color:#555;">220.02</div>
<div class="t" style="left:182.20px;top:443.08px;font-size:7.7px;color:#555;letter-spacing:0.141px;">2025-09-04</div>
<div class="t" style="left:312.49px;top:442.90px;font-size:7.8px;color:#555;">-</div>
<div class="t" style="left:360.14px;top:442.90px;font-size:7.8px;color:#555;">382.23</div>
<div class="t" style="left:429.04px;top:442.90px;font-size:7.8px;color:#555;">365.89</div>
<div class="t" style="left:498.24px;top:442.90px;font-size:7.8px;color:#555;">288.98</div>
<div class="t" style="left:567.34px;top:442.90px;font-size:7.8px;color:#555;">307.59</div>
<div class="t" style="left:182.20px;top:458.13px;font-size:7.7px;color:#555;letter-spacing:0.141px;">2025-09-05</div>
<div class="t" style="left:312.49px;top:457.95px;font-size:7.8px;color:#555;">-</div>
<div class="t" style="left:360.14px;top:457.95px;font-size:7.8px;color:#555;">390.25</div>
<div class="t" style="left:429.04px;top:457.95px;font-size:7.8px;color:#555;">442.83</div>
<div class="t" style="left:498.24px;top:457.95px;font-size:7.8px;color:#555;">316.01</div>
<div class="t" style="left:567.34px;top:457.95px;font-size:7.8px;color:#555;">304.77</div>
<div class="t" style="left:182.20px;top:473.03px;font-size:7.7px;color:#555;letter-spacing:0.141px;">2025-09-06</div>
<div class="t" style="left:312.49px;top:472.85px;font-size:7.8px;color:#555;">-</div>
<div class="t" style="left:360.14px;top:472.85px;font-size:7.8px;color:#555;">701.62</div>
<div class="t" style="left:429.04px;top:472.85px;font-size:7.8px;color:#555;">549.86</div>
<div class="t" style="left:498.24px;top:472.85px;font-size:7.8px;color:#555;">533.29</div>
<div class="t" style="left:567.34px;top:472.85px;font-size:7.8px;color:#555;">479.26</div>
<div class="t" style="left:216.80px;top:496.80px;font-size:8.5px;color:#1f2a4a;letter-spacing:0.296px;-webkit-text-stroke:0.2px #1f2a4a;">Totals</div>
<div class="t" style="left:297.60px;top:496.80px;font-size:8.5px;color:#c5c8cf;letter-spacing:0.069px;-webkit-text-stroke:0.2px #c5c8cf;">Details</div>
<div class="t" style="left:372.50px;top:496.80px;font-size:8.5px;color:#1f2a4a;letter-spacing:0.207px;-webkit-text-stroke:0.2px #1f2a4a;">Transpose</div>
<!-- popup -->
<div class="a" style="left:184.1px;top:280.9px;width:144px;height:140.7px;background:#fff;border-radius:2px;box-shadow:0 1px 3px rgba(0,0,0,0.28),0 0 1px rgba(0,0,0,0.18)"></div>
<svg class="full" viewBox="0 0 1002 510">
<path d="M184.5,353 L173.8,362.6 L184.5,372.2 Z" fill="#fff" style="filter:drop-shadow(-1px 0 1.5px rgba(0,0,0,0.12))"/>
<rect x="188.2" y="380.2" width="37.9" height="20.7" fill="#f5b4b9"/>
<circle cx="196.3" cy="309.1" r="4.2" fill="none" stroke="#6a6d75" stroke-width="0.9"/>
<circle cx="196.3" cy="326.8" r="4.2" fill="none" stroke="#6a6d75" stroke-width="0.9"/>
<circle cx="196.3" cy="344.9" r="4.2" fill="none" stroke="#6a6d75" stroke-width="0.9"/>
<circle cx="196.3" cy="362.6" r="4.2" fill="none" stroke="#6a6d75" stroke-width="0.9"/>
<circle cx="196.3" cy="390.3" r="4.2" fill="none" stroke="#3f4fd0" stroke-width="0.9"/>
<circle cx="196.3" cy="390.3" r="2.3" fill="#3f4fd0"/>
<circle cx="196.3" cy="408.0" r="4.2" fill="none" stroke="#6a6d75" stroke-width="0.9"/>
<path d="M316.3,285.8 L320.7,290.4 M320.7,285.8 L316.3,290.4" stroke="#6b6d72" stroke-width="1.5" stroke-linecap="butt"/>
</svg>
<div class="t" style="left:192.20px;top:289.83px;font-size:9.3px;color:#2b3960;letter-spacing:0.571px;-webkit-text-stroke:0.22px #2b3960;">Group dates by</div>
<div class="t" style="left:205.50px;top:305.24px;font-size:7.4px;color:#2b3960;letter-spacing:0.121px;-webkit-text-stroke:0.18px #2b3960;">Year</div>
<div class="t" style="left:205.50px;top:322.94px;font-size:7.4px;color:#2b3960;letter-spacing:0.238px;-webkit-text-stroke:0.18px #2b3960;">Month</div>
<div class="t" style="left:205.50px;top:341.04px;font-size:7.4px;color:#2b3960;letter-spacing:0.271px;-webkit-text-stroke:0.18px #2b3960;">Month (stacked)</div>
<div class="t" style="left:205.50px;top:358.74px;font-size:7.4px;color:#2b3960;letter-spacing:-0.089px;-webkit-text-stroke:0.18px #2b3960;">Week</div>
<div class="t" style="left:205.50px;top:386.44px;font-size:7.4px;color:#2b3960;letter-spacing:-0.078px;-webkit-text-stroke:0.18px #2b3960;">Day</div>
<div class="t" style="left:205.50px;top:404.14px;font-size:7.4px;color:#2b3960;letter-spacing:0.226px;-webkit-text-stroke:0.18px #2b3960;">Day (stacked)</div>
<div class="t" style="left:206.70px;top:370.94px;font-size:7.4px;color:#2b3960;letter-spacing:0.240px;-webkit-text-stroke:0.18px #2b3960;">Monday - Sunday</div>
<div class="a" style="left:0;top:0;width:2px;height:510px;background:#000"></div>
<!-- annotations -->
<div class="a" style="left:0px;top:104.3px;width:31.8px;height:32.9px;border:2px solid #ee5560"></div>
<svg class="full" viewBox="0 0 1002 510"><circle cx="25.3" cy="141.3" r="4.55" fill="#f05a64"/><path d="M26.3,138.9 Q25.6,138.5 24.9,138.6 Q23.8,138.9 23.8,141.2 M23.8,141.4 A1.35,1.3 0 1 0 26.5,141.4 A1.35,1.3 0 1 0 23.8,141.4" fill="none" stroke="#fff" stroke-width="0.95" stroke-linecap="round"/></svg>
<svg class="full" viewBox="0 0 1002 510">
<path d="M890,50 V33" stroke="#f0545f" stroke-width="4.4"/>
<path d="M883,43.6 L890,31.8 L897,43.6" fill="none" stroke="#f0545f" stroke-width="4" stroke-linejoin="miter" stroke-linecap="butt"/>
</svg>
<div class="a" style="left:34.2px;top:105.6px;width:37.4px;height:37.4px;border-radius:50%;background:#f0545f"></div>
<svg class="full" viewBox="0 0 1002 510"><path d="M51.7,132.9 V121.2 H47.8 V118.8 Q51.1,118.7 51.8,115.8 H55.1 V132.9 Z" fill="#fff"/></svg>
<div class="badge" style="left:115.30px;top:326.30px;"><span>2</span></div>
<div class="badge" style="left:261.10px;top:396.30px;"><span>3</span></div>
<div class="badge" style="left:871.30px;top:49.30px;"><span>4</span></div>
</body></html>
